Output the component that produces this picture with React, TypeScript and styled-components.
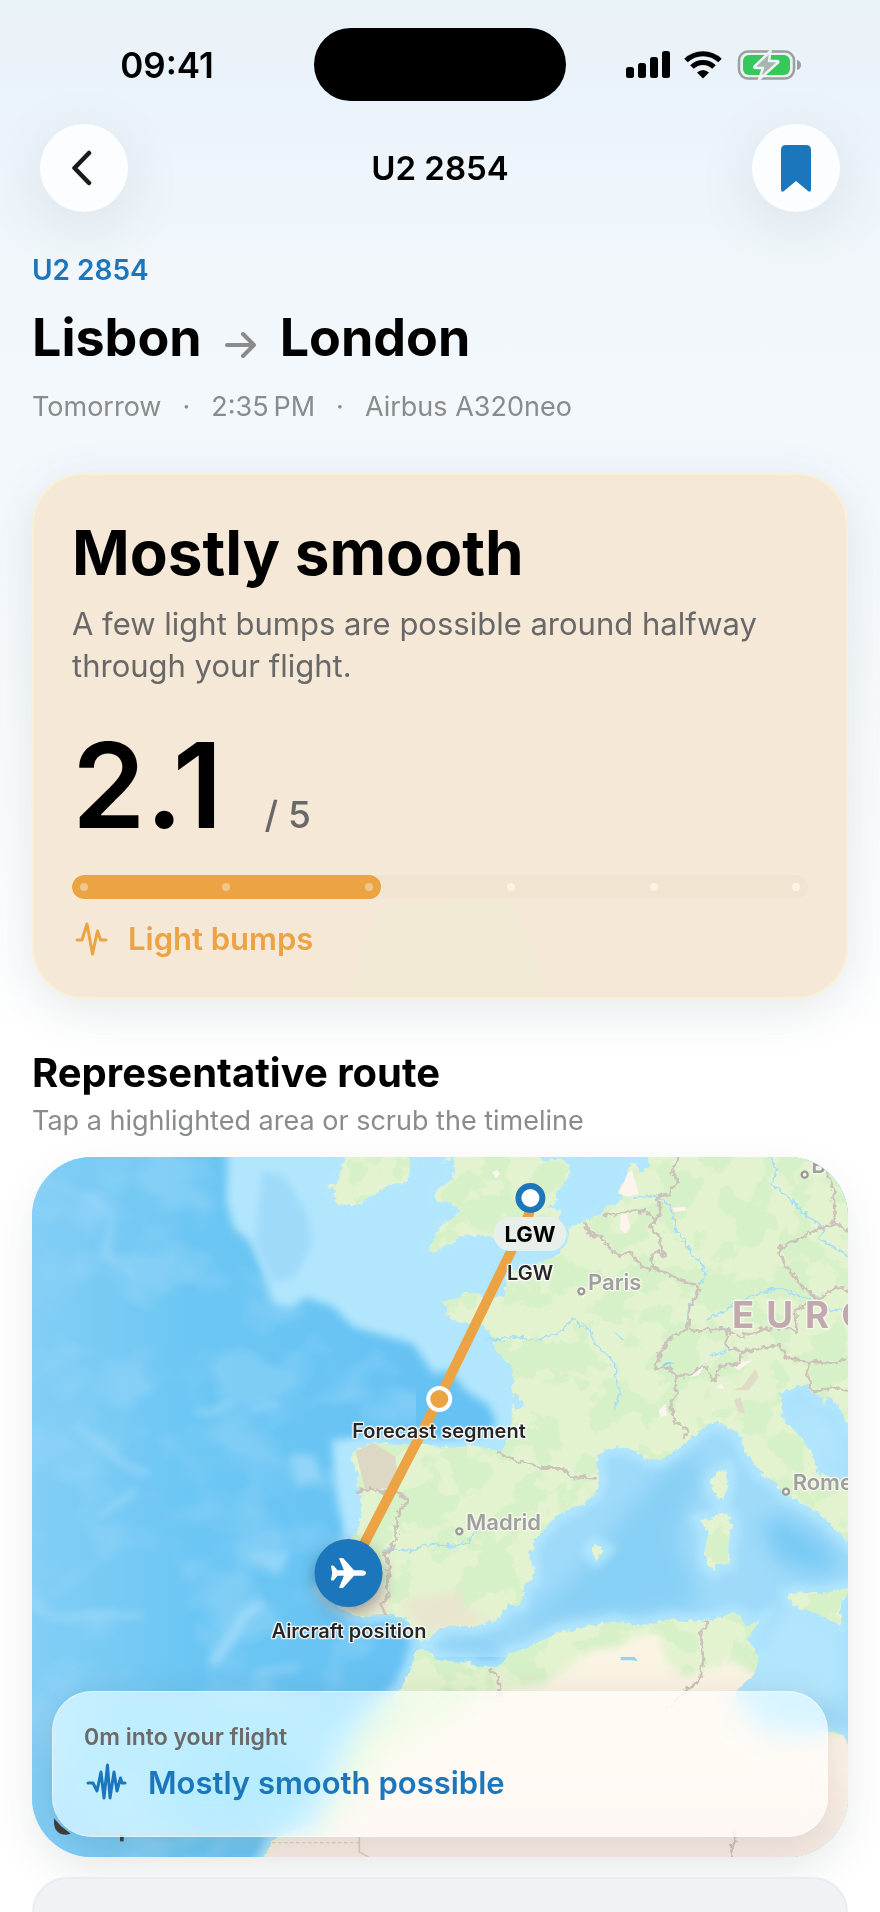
// App.tsx
import React from 'react'
import styled, { createGlobalStyle } from 'styled-components'

const cores = {
  texto: '#000000',
  azul: '#1c76bc',
  laranja: '#eba344',
  cinza: '#8a8b8c',
  cinzaEscuro: '#686868',
  cartao: '#f5e8d6'
}

const GlobalStyle = createGlobalStyle`
  * {
    box-sizing: border-box;
  }

  body {
    margin: 0;
    color: ${cores.texto};
    font-family: Inter, 'Liberation Sans', sans-serif;
    background-color: #ffffff;
  }

  h1, h2, p {
    margin: 0;
  }
`

const Page = styled.div`
  min-height: 100vh;
  display: flex;
  flex-direction: column;
  overflow: hidden;
  background: linear-gradient(#e9f2f5 0, #ebf3fb 100px, #f1f7fb 260px, #f3f8fd 460px, #ffffff 1060px);
`

const StatusBar = styled.div`
  display: grid;
  grid-template-columns: 1fr 252px 1fr;
  align-items: center;
  justify-items: center;
  padding: 28px 20px 23px;
`

const Clock = styled.span`
  font-size: 35px;
  line-height: 40px;
  font-weight: 600;
`

const Island = styled.div`
  width: 252px;
  height: 73px;
  border-radius: 37px;
  background-color: #000000;
`

const StatusIcons = styled.svg`
  width: 176px;
  height: 30px;
`

const NavBar = styled.header`
  display: flex;
  align-items: center;
  justify-content: space-between;
  padding: 0 40px;
`

const NavTitle = styled.span`
  font-size: 33px;
  line-height: 40px;
  font-weight: 600;
`

const RoundButton = styled.button`
  width: 88px;
  height: 88px;
  padding: 0;
  border: 0;
  border-radius: 50%;
  display: flex;
  align-items: center;
  justify-content: center;
  background-color: #fbfdff;
  box-shadow: 0 14px 60px rgba(60, 90, 80, 0.12);
`

const Content = styled.main`
  flex: 1;
  display: flex;
  flex-direction: column;
  padding: 40px 32px 0;
`

const FlightInfo = styled.section`
  display: flex;
  flex-direction: column;
  gap: 18px;
`

const FlightCode = styled.p`
  font-size: 28px;
  line-height: 36px;
  font-weight: 600;
  color: ${cores.azul};
`

const Route = styled.h1`
  display: flex;
  align-items: center;
  gap: 23px;
  font-size: 52px;
  line-height: 64px;
  font-weight: 700;

  svg {
    margin-top: 14px;
  }
`

const Meta = styled.p`
  display: flex;
  gap: 21px;
  font-size: 27px;
  line-height: 38px;
  color: ${cores.cinza};
`

const ForecastCard = styled.section`
  position: relative;
  margin-top: 47px;
  padding: 38px;
  border: 2px solid #faf0d4;
  border-radius: 52px;
  background-color: ${cores.cartao};
  box-shadow: 0 10px 48px rgba(40, 70, 70, 0.12);
`

const Glow = styled.svg`
  position: absolute;
  left: 39%;
  bottom: 0;
  width: 24%;
  height: 100px;
`

const ForecastTitle = styled.h2`
  font-size: 62px;
  line-height: 80px;
  font-weight: 700;
`

const ForecastText = styled.p`
  max-width: 700px;
  margin-top: 10px;
  font-size: 31px;
  line-height: 42px;
  color: ${cores.cinzaEscuro};
`

const Score = styled.div`
  display: flex;
  align-items: baseline;
  gap: 42px;
  margin-top: 40px;
  font-size: 118px;
  line-height: 116px;
  font-weight: 600;

  small {
    font-size: 37px;
    line-height: 40px;
    font-weight: 500;
    color: ${cores.cinzaEscuro};
  }
`

const Track = styled.div`
  position: relative;
  height: 24px;
  margin-top: 32px;
  border-radius: 12px;
  overflow: hidden;
  background-color: #f1e5d2;
`

const Fill = styled.div`
  height: 100%;
  border-radius: 12px;
  background-color: ${cores.laranja};
`

const Ticks = styled.div`
  position: absolute;
  inset: 0;
  display: flex;
  align-items: center;
  justify-content: space-between;
  padding: 0 8px;

  span {
    width: 8px;
    height: 8px;
    border-radius: 50%;
    background-color: rgba(250, 240, 225, 0.45);
  }

  span:nth-child(n + 4) {
    background-color: #fbf3e4;
  }
`

const Level = styled.div<{ $color: string; $gap: number }>`
  position: relative;
  display: flex;
  align-items: center;
  gap: ${({ $gap }) => $gap}px;
  font-size: 31px;
  line-height: 40px;
  font-weight: 600;
  color: ${({ $color }) => $color};
`

const CardLevel = styled(Level)`
  margin-top: 20px;
`

const SectionTitle = styled.h2`
  margin-top: 50px;
  font-size: 40px;
  line-height: 48px;
  font-weight: 700;
`

const SectionText = styled.p`
  margin-top: 6px;
  font-size: 27px;
  line-height: 36px;
  color: ${cores.cinza};
`

const MapCard = styled.section`
  position: relative;
  border-radius: 60px;
  overflow: hidden;
  background-color: #66c2f3;
`

const MapShadow = styled.div`
  margin-top: 18px;
  border-radius: 60px;
  box-shadow: 0 16px 48px -8px rgba(40, 60, 60, 0.14);
`

const MapDrawing = styled.svg`
  display: block;
  width: 100%;
  height: auto;
`

const Pin = styled.button<{ $x: number; $y: number; $lift: number }>`
  position: absolute;
  left: ${({ $x }) => ($x / 816) * 100}%;
  top: ${({ $y }) => ($y / 700) * 100}%;
  display: flex;
  flex-direction: column;
  align-items: center;
  padding: 0;
  border: 0;
  background: none;
  font-family: inherit;
  color: #262626;
  transform: translate(-50%, -${({ $lift }) => $lift}px);
`

const Dot = styled.span<{ $size: number; $border: number; $color: string; $ring: string }>`
  width: ${({ $size }) => $size}px;
  height: ${({ $size }) => $size}px;
  border: ${({ $border, $ring }) => `${$border}px solid ${$ring}`};
  border-radius: 50%;
  background-color: ${({ $color }) => $color};
`

const PlaneBadge = styled.span`
  width: 68px;
  height: 68px;
  border-radius: 50%;
  display: flex;
  align-items: center;
  justify-content: center;
  background-color: ${cores.azul};
  box-shadow: 0 6px 16px rgba(40, 40, 60, 0.4);
`

const Tag = styled.span`
  margin: 4px 0 14px;
  padding: 3px 11px;
  border-radius: 17px;
  font-size: 22px;
  line-height: 28px;
  font-weight: 700;
  color: #000000;
  background-color: #e8efea;
`

const PinLabel = styled.span<{ $top: number }>`
  margin-top: ${({ $top }) => $top}px;
  font-size: 20px;
  line-height: 24px;
  font-weight: 600;
  white-space: nowrap;
  text-shadow: 0 0 3px #ffffff, 1px 1px 1px #ffffff, -1px -1px 1px #ffffff,
    1px -1px 1px #ffffff, -1px 1px 1px #ffffff;
`

const FlightPanel = styled.div`
  position: absolute;
  left: 20px;
  right: 20px;
  bottom: 20px;
  padding: 32px 32px 34px;
  border-radius: 40px;
  background-color: rgba(255, 255, 255, 0.62);
  backdrop-filter: blur(16px) saturate(1.5);
  box-shadow: inset 0 0 0 1px rgba(255, 255, 255, 0.4), 0 8px 40px rgba(60, 30, 20, 0.12);
`

const Elapsed = styled.p`
  margin-bottom: 12px;
  font-size: 23px;
  line-height: 28px;
  font-weight: 600;
  color: #6b6a69;
`

const NextCard = styled.section`
  flex: 1;
  min-height: 35px;
  margin-top: 20px;
  border: 2px solid #e9edef;
  border-bottom: 0;
  border-radius: 60px 60px 0 0;
  background-color: #f0f2f6;
`

const LAND =
  'M1844 0 L1854 29 1824 49 1814 19 1794 19 1784 59 1759 109 1774 119 1754 139 1724 149 1704 174 1664 189 1614 214 1604 259 1574 299 1504 324 1494 344 1424 339 1419 419 1349 424 1344 409 1299 409 1279 424 1229 434 1249 454 1239 474 1284 494 1354 504 1384 549 1389 579 1434 619 1444 649 1439 719 1459 709 1479 749 1454 759 1439 740 1439 799 1424 859 1409 884 1324 864 1254 874 1194 864 1094 864 1024 857 959 889 959 914 979 949 979 989 989 1029 984 1099 964 1139 930 1180 920 1260 870 1300 900 1335 964 1374 1014 1379 1074 1369 1124 1384 1154 1439 1169 1454 1189 1444 1224 1414 1254 1407 1334 1407 1394 1389 1424 1344 1464 1344 1479 1279 1504 1269 1504 1234 1492 1199 1509 1149 1554 1099 1574 1074 1624 1054 1694 1009 1704 969 1694 939 1692 904 1734 869 1794 874 1844 904 1884 909 1934 879 1994 829 2034 799 2054 794 2094 814 2124 834 2139 879 2184 949 2234 979 2254 1009 2304 1034 2384 1084 2394 1099 2460 1164 L2460 989 2384 959 2359 949 2334 879 2294 829 2254 789 2244 709 2274 694 2329 681 2339 709 2374 717 2369 749 2384 719 2409 729 2460 819 L2460 -20 1840 -20Z ' +
  'M1269 -20 L1264 69 1204 109 1214 134 1254 134 1289 159 1264 184 1234 199 1189 279 1204 289 1244 264 1294 234 1394 239 1470 230 1574 194 1589 164 1534 154 1564 144 1574 109 1609 59 1609 24 1594 9 1524 12 1514 -20Z ' +
  'M1224 24 L1250 0 1262 0Z ' +
  'M944 -20 L929 39 914 79 884 81 889 89 909 94 904 114 914 134 939 147 974 144 1044 99 1084 79 1124 79 1134 34 1129 -20Z ' +
  'M2039 969 L2044 959 2064 944 2084 939 2088 989 2074 1029 2059 1025 2040 1000Z ' +
  'M2004 1089 L2054 1079 2074 1064 2094 1079 2099 1119 2089 1169 2089 1219 2059 1219 2044 1239 2024 1219 2019 1179 2029 1129Z ' +
  'M1674 1184 L1689 1164 1719 1179 1694 1204Z ' +
  'M2269 1314 L2284 1309 2364 1312 2460 1290 2424 1339 2424 1404 2354 1369 2284 1344Z ' +
  'M1104 1599 L1134 1539 1154 1479 1179 1479 1214 1509 1284 1519 1314 1514 1334 1529 1404 1529 1434 1489 1474 1479 1584 1424 1674 1409 1744 1394 1834 1409 1904 1389 2014 1394 2104 1369 2124 1374 2139 1409 2179 1394 2144 1449 2179 1499 2169 1549 2114 1599 2110 1640 2200 1720 2389 1724 2434 1734 2460 1790 2460 2120 690 2120 724 2049 860 1990 910 1850 970 1720Z'

const DESERT =
  'M1060 1800 L1330 1620 1460 1590 1544 1579 1624 1519 1674 1479 1764 1469 1814 1439 1884 1429 1894 1509 1954 1559 2024 1539 2094 1509 2164 1549 2200 1720 2460 1730 2460 2120 690 2120 724 2049 900 2000Z'

const SHELF =
  'M589 -60 L584 130 604 210 654 255 684 320 724 440 784 450 820 420 904 450 964 510 1054 535 1144 560 1204 650 1254 639 1300 700 1370 745 1395 800 1340 850 1200 860 1000 840 900 849 910 980 924 1069 944 1149 1100 1150 1500 850 1900 0 1900 -60Z'

const BORDERS = [
  'M1939 0 L1932 20 1919 49 1934 60 1934 79 1914 98 1914 114 1874 119 1884 140 1884 169 1854 214 1884 239 1886 265 1899 299 1874 279 1859 300 1859 329 1904 349 1950 370 2004 389 1989 420 1974 449 1970 490 1964 519 1924 534 1900 565 1884 589 1869 639 1914 629 1929 664 1984 649 2014 624 2030 650 2049 669 2064 629 2119 619 2134 584 2084 569 2084 519',
  'M1659 194 L1669 229 1709 239 1730 270 1764 299 1794 284 1824 324 1859 339',
  'M1709 174 L1754 174 1794 159 1844 164 1869 189',
  'M1964 519 L1994 521 2074 514 2124 539 2184 519 2254 509 2294 524 2289 459 2334 439',
  'M1929 664 L1934 714 1914 739 1929 799 1969 819 1959 844',
  'M2134 584 L2239 564 2269 604 2334 614 2414 619 2448 604',
  'M2334 614 L2324 649 2344 709 2404 689 2448 704',
  'M2384 39 L2404 99 2409 199 2448 219',
  'M2409 199 L2374 209 2314 239 2239 274 2259 324 2304 379 2359 429 2414 389 2448 399',
  'M1394 884 L1444 909 1544 934 1594 934 1614 959 1694 964',
  'M974 1004 L1014 994 1049 1004 1104 1009 1129 1029 1094 1079 1094 1139 1074 1184 1054 1184 1074 1229 1064 1279 1069 1319 1049 1344 1059 1374',
  'M2029 1394 L2004 1429 2014 1509 2004 1569 1964 1599 1900 1660',
  'M1374 1534 L1399 1559 1404 1620',
  'M2108 2020 L2110 2050 2098 2070 2100 2100'
]

const RIVERS = [
  'M1359 549 L1394 549 1454 539 1514 549 1574 529 1624 489 1674 519 1694 569 1744 609 1764 709 1744 759',
  'M1804 124 L1874 114 1914 149 1934 219 1984 299 2014 319 2019 354 1999 399 1970 450 1964 515',
  'M2214 0 L2234 39 2214 79 2274 124 2304 159 2374 214 2364 249 2448 294',
  'M2024 489 L2154 419 2244 389 2314 424 2404 464 2448 449',
  'M1054 1179 L1140 1180 1200 1160 1264 1169 1314 1149 1334 1124',
  'M1750 525 L1774 549',
  'M2034 599 L2084 580'
]

const StatusGlyphs: React.FC = () => (
  <StatusIcons viewBox="0 0 176 30" aria-hidden="true">
    <rect x="1" y="17" width="8" height="11" rx="2.5" />
    <rect x="13" y="13" width="8" height="15" rx="2.5" />
    <rect x="25" y="7" width="8" height="21" rx="2.5" />
    <rect x="37" y="1" width="8" height="27" rx="2.5" />
    <g fill="none" stroke="#000" strokeWidth="5">
      <path d="M61 10.500 A24.500 24.500 0 0 1 95 10.500" />
      <path d="M67 17 A15.500 15.500 0 0 1 89 17" />
    </g>
    <path d="M78 28.500 L72 22.500 Q78 17.500 84 22.500Z" />
    <rect x="114" y="1.500" width="55" height="27" rx="9" fill="none" stroke="#9c9e9f" strokeWidth="2.500" />
    <rect x="118" y="5" width="47" height="20" rx="6" fill="#37c85b" />
    <path d="M172 10 Q176 11 176 15 Q176 19 172 20Z" fill="#9c9e9f" />
    <path
      d="M145.500 1 L129.500 16.500 Q128.500 18 130.500 18 H138 L134 29.500 L153 12.500 Q154 11 152 11 H144Z"
      fill="#a9b3b0"
      stroke="#ecf4fa"
      strokeWidth="2.500"
      strokeLinejoin="round"
    />
  </StatusIcons>
)

const EuropeMap: React.FC = () => (
  <MapDrawing viewBox="0 0 2448 2100" role="img" aria-label="Route map">
    <defs>
      <filter id="coast" x="0" y="0" width="100%" height="100%">
        <feTurbulence type="fractalNoise" baseFrequency="0.06" numOctaves="2" seed="4" />
        <feDisplacementMap in="SourceGraphic" scale="24" xChannelSelector="R" yChannelSelector="G" />
      </filter>
      <filter id="soft" x="-20%" y="-20%" width="140%" height="140%">
        <feGaussianBlur stdDeviation="12" />
      </filter>
      <filter id="softer" x="-20%" y="-20%" width="140%" height="140%">
        <feGaussianBlur stdDeviation="34" />
      </filter>
      <filter id="meadow" x="0" y="0" width="100%" height="100%" colorInterpolationFilters="sRGB">
        <feTurbulence type="fractalNoise" baseFrequency="0.009" numOctaves="4" seed="11" />
        <feColorMatrix values="0 0 0 0 0.84  0 0 0 0 0.94  0 0 0 0 0.78  0 16 0 0 -7.8" />
      </filter>
      <filter id="waves" x="0" y="0" width="100%" height="100%" colorInterpolationFilters="sRGB">
        <feTurbulence type="fractalNoise" baseFrequency="0.004 0.005" numOctaves="3" seed="23" />
        <feColorMatrix values="0 0 0 0 0.62  0 0 0 0 0.85  0 0 0 0 0.98  0 4 0 0 -1.8" />
      </filter>
      <clipPath id="land">
        <path d={LAND} />
      </clipPath>
      <linearGradient id="ocean">
        <stop offset="0" stopColor="#82cef6" />
        <stop offset="0.2" stopColor="#6bc6f3" />
        <stop offset="0.5" stopColor="#66c2f3" />
      </linearGradient>
      <linearGradient id="sand" x1="0" x2="0" y1="0" y2="1">
        <stop offset="0" stopColor="#faf4e3" />
        <stop offset="0.6" stopColor="#fdf3ea" />
        <stop offset="1" stopColor="#f3e8e2" />
      </linearGradient>
    </defs>

    {/* sea */}
    <rect width="2448" height="2100" fill="url(#ocean)" />
    <rect width="1150" height="2100" filter="url(#waves)" opacity="0.42" />
    <path d={SHELF} fill="#b2e6fd" filter="url(#soft)" />
    <path d="M690 40 L760 60 830 180 840 260 790 360 720 380 670 260Z" fill="#9fdaf9" filter="url(#soft)" />
    <path d="M774 889 L850 895 865 970 790 985Z M640 1190 L780 1180 740 1260Z" fill="#a0dafa" opacity="0.7" filter="url(#soft)" />
    <path d="M90 100 L200 110 250 200 240 290 320 360 200 300 230 180Z" fill="#9ad7f8" opacity="0.6" filter="url(#soft)" />
    <g fill="none" stroke="#a5dcfa" strokeWidth="14" filter="url(#soft)" opacity="0.8">
      <path d="M130 810 L190 850 290 930 350 950" />
      <path d="M490 760 L530 770 610 730" />
      <path d="M660 760 L740 740" />
      <path d="M540 1520 L590 1450 640 1370 690 1340" strokeWidth="30" />
      <path d="M660 1550 L800 1530" />
      <path d="M200 1080 L310 1000" />
      <path d="M0 1340 L60 1380 330 1375" />
    </g>
    <path d="M1130 1380 L1200 1380 1500 1100 1700 780 2448 560 2448 1780 2100 1700 1500 1500 1180 1500Z" fill="#9fdaf9" />
    <path d="M1210 1455 L1440 1430 1620 1270 1760 1100 1880 960 1980 880 2010 960 1930 1130 1980 1290 2010 1340 1800 1370 1600 1380 1440 1440 1320 1500Z" fill="#86cff5" filter="url(#softer)" />
    <path d="M2180 1100 L2260 1080 2420 1200 2400 1250 2250 1220Z" fill="#76c9f4" filter="url(#softer)" />
    <path d="M2180 1440 L2280 1330 2448 1420 2448 1640 2120 1640Z M2240 680 L2448 800 2448 1000 2300 860Z" fill="#b2e6fd" filter="url(#softer)" />
    <path d={LAND} fill="none" stroke="#b4e7fe" strokeWidth="46" opacity="0.85" filter="url(#soft)" />

    {/* land */}
    <g filter="url(#coast)">
      <path d={LAND} fill="#e3f3d0" />
    </g>
    <g clipPath="url(#land)">
      <rect width="2448" height="2100" filter="url(#meadow)" />
      <path d="M970 880 L1024 857 1090 900 1100 990 1000 1000Z" fill="#ddd8c4" />
      <path d="M1100 1330 L1290 1300 1290 1350 1390 1390 1180 1430 1140 1380Z M900 1320 L1060 1280 1070 1370 960 1374Z" fill="#e9e6cf" filter="url(#soft)" />
      <path d={DESERT} fill="url(#sand)" filter="url(#soft)" />
      <g fill="#fdf4ee">
        <path d="M1784 49 L1800 40 1820 110 1790 119 1759 109Z" />
        <path d="M1765 175 L1785 170 1795 210 1780 230 1765 215Z" />
        <path d="M1380 45 L1395 38 1405 52 1392 64Z" />
        <path d="M1634 395 L1650 385 1665 395 1655 425Z" />
        <path d="M1920 152 L1960 150 1962 160 1930 165Z" />
        <path d="M1970 660 L2020 620 2000 655Z M2090 620 L2160 610 2120 640Z" />
        <path d="M2050 690 L2070 680 2078 698Z M1880 760 L1900 740 1905 775 1885 780Z" />
      </g>
      <path d="M2100 700 L2130 690 2170 635 2180 660 2150 700Z M2105 730 L2125 720 2140 770 2120 765Z" fill="#dedcc6" />
    </g>
    <path d="M1890 627 Q1904 608 1930 620 Q1910 618 1890 632Z M2055 504 L2094 520 2090 524Z M1766 1500 H1808 L1818 1512 1800 1510 H1766Z" fill="#8fd5f8" />
    <g filter="url(#coast)" fill="none" strokeLinejoin="round">
      {RIVERS.map((d) => (
        <path key={d} d={d} stroke="#a3defb" strokeWidth="5" />
      ))}
      {BORDERS.map((d) => (
        <path key={d} d={d} stroke="#cdc2ba" strokeWidth="8" />
      ))}
    </g>
    <path d="M720 2057 H980" stroke="#d8cfbd" strokeWidth="4" strokeDasharray="10 8" />
    <path d="M982 2040 V2085 L1010 2100" fill="none" stroke="#d4cdb8" strokeWidth="5" />

    {/* places */}
    <g fontFamily="Inter, sans-serif" stroke="#f5f8ec" strokeWidth="8" strokeLinejoin="round" paintOrder="stroke">
      <g fill="#a09f9f" fontSize="66" fontWeight="600">
        <text x="1668" y="399">Paris</text>
        <text x="1302" y="1119">Madrid</text>
        <text x="2282" y="1000">Rome</text>
        <text x="2338" y="48">Berlin</text>
      </g>
      <text x="2100" y="512" fill="#c2a9ae" fontSize="110" fontWeight="700" letterSpacing="36">
        EUROPE
      </text>
    </g>
    <g fill="#f5f8ec" stroke="#999999" strokeWidth="7">
      <circle cx="1648" cy="403" r="9" />
      <circle cx="1282" cy="1123" r="9" />
      <circle cx="2262" cy="1004" r="9" />
      <circle cx="2318" cy="53" r="9" />
    </g>

    {/* route */}
    <path d="M1494 150 L1490 175 1221 726 951 1248" fill="none" stroke={cores.laranja} strokeWidth="30" />
    <path d="M66 1984 L86 2006 116 2030 Q84 2040 70 2016 Q64 2002 66 1984Z" fill="#3f3f3f" />
    <rect x="264" y="2034" width="11" height="19" fill="#3f3f3f" />
  </MapDrawing>
)

const App: React.FC = () => {
  const score = 2.1
  const max = 5

  return (
    <>
      <GlobalStyle />
      <Page>
        <StatusBar>
          <Clock>09:41</Clock>
          <Island />
          <StatusGlyphs />
        </StatusBar>

        <NavBar>
          <RoundButton type="button" aria-label="Back">
            <svg width="24" height="40" viewBox="0 0 24 40" fill="none">
              <path d="M17 5 L2.500 20 L17 35" stroke="#1a1a1a" strokeWidth="4.500" strokeLinecap="round" strokeLinejoin="round" />
            </svg>
          </RoundButton>
          <NavTitle>U2 2854</NavTitle>
          <RoundButton type="button" aria-label="Save flight">
            <svg width="30" height="48" viewBox="0 0 30 48">
              <path
                d="M5 1 H25 Q30 1 30 6 V45 Q30 49 27 47 L15 37 L3 47 Q0 49 0 45 V6 Q0 1 5 1Z"
                fill={cores.azul}
              />
            </svg>
          </RoundButton>
        </NavBar>

        <Content>
          <FlightInfo>
            <FlightCode>U2 2854</FlightCode>
            <Route>
              Lisbon
              <svg width="32" height="26" viewBox="0 0 32 26" fill="none" aria-label="to">
                <path d="M2 13 H29 M18 2 L29 13 L18 24" stroke={cores.cinza} strokeWidth="4" strokeLinecap="round" strokeLinejoin="round" />
              </svg>
              London
            </Route>
            <Meta>
              <span>Tomorrow</span>
              <span>·</span>
              <span>2:35&#8239;PM</span>
              <span>·</span>
              <span>Airbus A320neo</span>
            </Meta>
          </FlightInfo>

          <ForecastCard>
            <Glow viewBox="0 0 196 100" preserveAspectRatio="none" aria-hidden="true">
              <path d="M0 100 L10 60 L32 15 Q38 5 50 5 H92 V0 H152 Q166 6 170 18 L186 60 L196 100Z" fill="#f1ead4" />
            </Glow>
            <ForecastTitle>Mostly smooth</ForecastTitle>
            <ForecastText>A few light bumps are possible around halfway through your flight.</ForecastText>
            <Score>
              {score}
              <small>/ {max}</small>
            </Score>
            <Track>
              <Fill style={{ width: `${(score / max) * 100}%` }} />
              <Ticks>
                {[0, 1, 2, 3, 4, 5].map((tick) => (
                  <span key={tick} />
                ))}
              </Ticks>
            </Track>
            <CardLevel $color={cores.laranja} $gap={18}>
              <svg width="38" height="36" viewBox="0 0 38 36" fill="none">
                <path
                  d="M5 19 H10 L15 3 L20.500 33 L25.500 10 L28.500 19 H34"
                  stroke={cores.laranja}
                  strokeWidth="3"
                  strokeLinecap="round"
                  strokeLinejoin="round"
                />
              </svg>
              Light bumps
            </CardLevel>
          </ForecastCard>

          <SectionTitle>Representative route</SectionTitle>
          <SectionText>Tap a highlighted area or scrub the timeline</SectionText>

          <MapShadow>
            <MapCard>
              <EuropeMap />
              <Pin type="button" $x={498} $y={41} $lift={15}>
                <Dot $size={30} $border={6} $color="#ffffff" $ring={cores.azul} />
                <Tag>LGW</Tag>
                <PinLabel $top={-4}>LGW</PinLabel>
              </Pin>
              <Pin type="button" $x={407} $y={242} $lift={13}>
                <Dot $size={26} $border={4} $color={cores.laranja} $ring="#ffffff" />
                <PinLabel $top={7}>Forecast segment</PinLabel>
              </Pin>
              <Pin type="button" $x={317} $y={416} $lift={34}>
                <PlaneBadge>
                  <svg width="36" height="32" viewBox="0 0 36 32" fill="#ffffff">
                    <path d="M35.500 16 C35.500 18 33.500 18.800 31 18.800 H23.500 L13.200 30.300 Q12.600 31 11.600 31 H9.200 Q8.400 31 8.700 30.200 L13.400 18.800 H7 L3.400 23 Q3 23.500 2.400 23.500 H1 Q0.400 23.500 0.500 22.800 L1.700 16 L0.500 9.200 Q0.400 8.500 1 8.500 H2.400 Q3 8.500 3.400 9 L7 13.200 H13.400 L8.700 1.800 Q8.400 1 9.200 1 H11.600 Q12.600 1 13.200 1.700 L23.500 13.200 H31 C33.500 13.200 35.500 14 35.500 16Z" />
                  </svg>
                </PlaneBadge>
                <PinLabel $top={12}>Aircraft position</PinLabel>
              </Pin>
              <FlightPanel>
                <Elapsed>0m into your flight</Elapsed>
                <Level $color={cores.azul} $gap={19}>
                  <svg width="45" height="40" viewBox="0 0 45 40" fill="none">
                    <path
                      d="M4 20 H9 L13 28 L17 9 L20 35 L23.500 2 L26 35 L30 9 L33 28 L36.500 15 L38 20 H41"
                      stroke={cores.azul}
                      strokeWidth="3"
                      strokeLinecap="round"
                      strokeLinejoin="round"
                    />
                  </svg>
                  Mostly smooth possible
                </Level>
              </FlightPanel>
            </MapCard>
          </MapShadow>

          <NextCard />
        </Content>
      </Page>
    </>
  )
}

export default App
